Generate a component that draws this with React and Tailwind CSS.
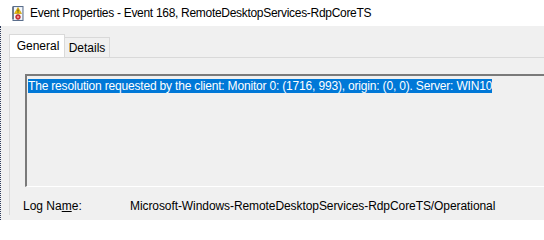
import React from "react";

function EventIcon() {
    return (
        <svg width="13" height="15" viewBox="0 0 13 15" className="shrink-0">
            <rect x="2" y="0.5" width="10" height="14" fill="#dfe6f0" stroke="#5a6e8c" />
            <rect x="3" y="1.5" width="8" height="12" fill="#f6f8fb" />
            <path d="M1 2h2M1 4h2M1 6h2M1 8h2M1 10h2M1 12h2" stroke="#3b4a63" strokeWidth="1" />
            <path d="M7 1.5 L10.5 7.5 L3.5 7.5 Z" fill="#f5c400" stroke="#b38a00" strokeWidth="0.6" />
            <path d="M7 3.5v2.2M7 6.3v0.6" stroke="#222" strokeWidth="0.9" />
            <circle cx="7" cy="11" r="2.4" fill="#d9343a" stroke="#9c1d22" strokeWidth="0.6" />
            <circle cx="7" cy="11" r="0.9" fill="#f5b5b5" />
        </svg>
    );
}

export default function App() {
    return (
        <div className="w-[544px] h-[220px] overflow-hidden flex flex-col bg-[#f0f0f0] text-[12px] text-black font-['Liberation_Sans',sans-serif]">
            <div className="h-[26px] shrink-0 bg-white flex items-center pl-[11px] gap-[6px]">
                <EventIcon />
                <span className="whitespace-nowrap tracking-[-0.3px]">Event Properties - Event 168, RemoteDesktopServices-RdpCoreTS</span>
            </div>

            <div className="flex-1 flex flex-col border-l border-dotted border-[#2f3b5a]">
                <div className="pl-[8px] pt-[8px]">
                    <div className="flex items-end h-[23px]">
                        <div className="w-[56px] h-[23px] bg-white border border-b-0 border-[#d9d9d9] flex items-center justify-center pb-[1px] pl-[2px]">
                            General
                        </div>
                        <div className="w-[45px] h-[20px] bg-[#f0f0f0] border border-l-0 border-b-0 border-[#d9d9d9] flex items-center justify-center pt-[1px]">
                            Details
                        </div>
                    </div>
                    <div className="border-l border-t border-[#d9d9d9] pl-[15px] pt-[16px]">
                        <div className="h-[113px] border-t-2 border-l-2 border-t-[#7a7a7a] border-l-[#7a7a7a] border-b border-b-white pl-[1px] pt-[1px]">
                            <span className="bg-[#0078d7] text-white whitespace-nowrap leading-[14px] inline-block tracking-[-0.18px]">
                                The resolution requested by the client: Monitor 0: (1716, 993), origin: (0, 0). Server: WIN10
                            </span>
                        </div>
                        <div className="flex items-center mt-[10px] -ml-[2px] whitespace-nowrap">
                            <span className="w-[107px]">
                                Log Na<span className="underline">m</span>e:
                            </span>
                            <span className="tracking-[-0.08px]">Microsoft-Windows-RemoteDesktopServices-RdpCoreTS/Operational</span>
                        </div>
                    </div>
                </div>
            </div>
        </div>
    );
}
